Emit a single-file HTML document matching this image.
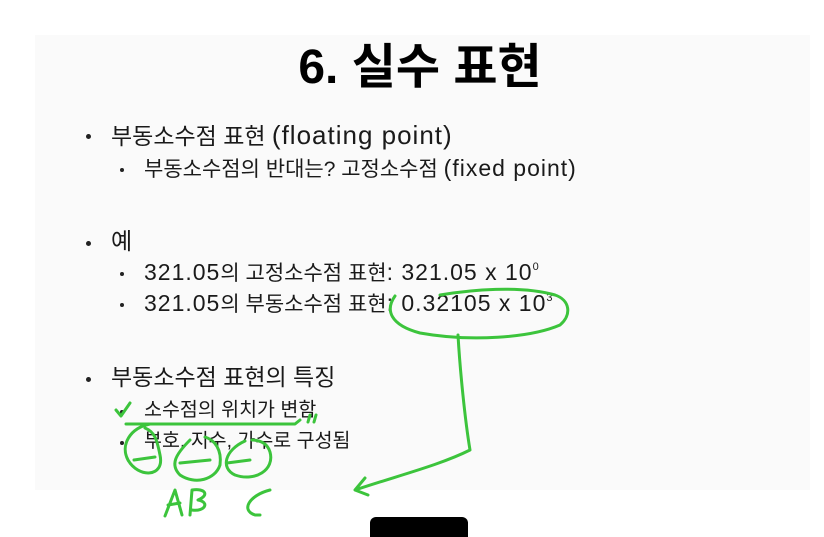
<!DOCTYPE html>
<html><head><meta charset="utf-8"><style>
html,body{margin:0;padding:0;width:824px;height:530px;overflow:hidden;background:#fff;}
.slide{position:absolute;left:35px;top:35px;width:775px;height:455px;background:#fafafa;}
.t{position:absolute;white-space:nowrap;font-family:"Liberation Sans","Noto Sans CJK KR",sans-serif;color:#1a1a1a;line-height:1;}
.title{left:0;width:840px;text-align:center;top:44px;font-size:48px;font-weight:bold;color:#000;}
.l1{font-size:23px;}
.l1 .e{font-size:26px;letter-spacing:1px;}
.l2{font-size:21px;}
.l2 .e{font-size:23px;letter-spacing:1px;}
.b{position:absolute;width:5px;height:5px;border-radius:50%;background:#222;}
sup{font-size:11px;vertical-align:10px;letter-spacing:0}
</style></head><body>
<div class="slide"></div>
<div class="t title">6. 실수 표현</div>

<div class="b" style="left:86px;top:134px"></div>
<div class="t l1" style="left:111px;top:122px">부동소수점 표현 <span class="e">(floating point)</span></div>
<div class="b" style="left:120px;top:168px;width:4px;height:4px"></div>
<div class="t l2" style="left:144px;top:157px">부동소수점의 반대는? 고정소수점 <span class="e">(fixed point)</span></div>

<div class="b" style="left:86px;top:241px"></div>
<div class="t l1" style="left:111px;top:230px">예</div>
<div class="b" style="left:120px;top:272px;width:4px;height:4px"></div>
<div class="t l2" style="left:144px;top:261px"><span class="e">321.05</span>의 고정소수점 표현<span class="e">: 321.05 x 10<sup>0</sup></span></div>
<div class="b" style="left:120px;top:303px;width:4px;height:4px"></div>
<div class="t l2" style="left:144px;top:292px"><span class="e">321.05</span>의 부동소수점 표현<span class="e">: 0.32105 x 10<sup>3</sup></span></div>

<div class="b" style="left:86px;top:377px"></div>
<div class="t l1" style="left:111px;top:366px">부동소수점 표현의 특징</div>
<div class="b" style="left:120px;top:410px;width:4px;height:4px"></div>
<div class="t l2" style="left:144px;top:401px;font-size:19.5px">소수점의 위치가 변함</div>
<div class="b" style="left:120px;top:441px;width:4px;height:4px"></div>
<div class="t l2" style="left:144px;top:432px;font-size:19.5px">부호, 지수, 가수로 구성됨</div>

<svg width="824" height="530" style="position:absolute;left:0;top:0" fill="none" stroke="#3cc43c" stroke-width="3" stroke-linecap="round" stroke-linejoin="round">
<path d="M395 296 C385 310 390 325 420 333 C470 342 530 338 560 325 C572 315 570 300 555 295 C520 285 470 290 440 295"/>
<path d="M458 335 C460 370 465 420 470 450 C440 465 400 475 355 490 M365 478 L355 490 L368 495"/>
<path d="M116 410 L121 416 L130 403"/>
<path d="M126 424 L295 424 L300 420"/>
<path d="M310 415 L308 422 M316 415 L314 422"/>
<path d="M150 424 C130 428 120 445 128 460 C138 478 165 478 160 455 C157 440 155 432 145 428"/>
<path d="M190 440 C175 455 170 465 180 475 C195 485 215 480 220 465 C222 450 215 440 205 437"/>
<path d="M245 441 C225 450 220 468 235 475 C255 482 275 470 270 452 C268 445 262 440 252 440"/>
<path d="M134 460 L155 457 M180 463 L210 460 M227 463 L250 460"/>
<path d="M165 516 L175 490 L182 515 M168 505 L180 503"/>
<path d="M190 515 L192 490 C205 488 210 495 198 500 C210 502 205 512 192 510"/>
<path d="M270 490 C250 495 240 510 255 515 L260 515"/>
</svg>
<div style="position:absolute;left:370px;top:517px;width:98px;height:20px;background:#000;border-radius:6px 6px 0 0"></div>
</body></html>
